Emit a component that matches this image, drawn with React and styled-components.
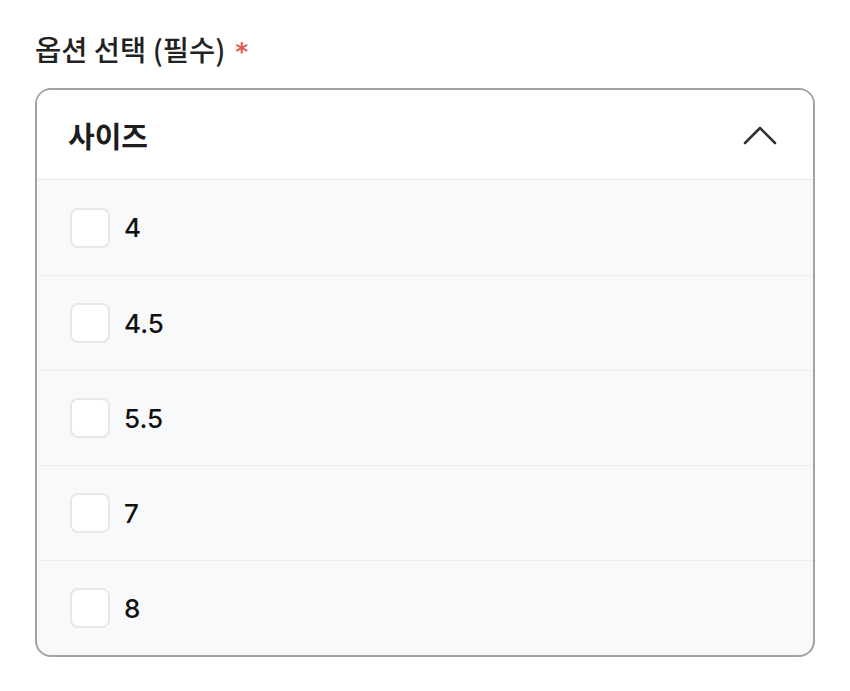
import React from "react";
import styled, { createGlobalStyle } from "styled-components";

const GlobalStyle = createGlobalStyle`
	body {
		margin: 0;
		background: #ffffff;
		font-family: "Inter", "Noto Sans CJK KR", sans-serif;
		color: #1d1d1f;
	}
`;

const Page = styled.div`
	padding: 29px 35px 0 35px;
	width: 780px;
`;

const Label = styled.div`
	font-family: "Noto Sans CJK KR", sans-serif;
	font-size: 28.5px;
	font-weight: 500;
	height: 40px;
	line-height: 40px;
	color: #222;
	display: flex;
	align-items: center;
	gap: 10px;

	.required {
		color: #e25a4f;
		font-family: "DejaVu Sans", sans-serif;
		font-size: 24px;
		font-weight: 700;
		line-height: 24px;
		transform: translateY(3px);
	}
`;

const Box = styled.div`
	margin-top: 19px;
	border: 2px solid #a3a3a5;
	border-radius: 16px;
	overflow: hidden;
	background: #f8f9fb;
`;

const Header = styled.div`
	height: 89px;
	display: flex;
	align-items: center;
	justify-content: space-between;
	padding: 0 36px 0 31px;
	background: #ffffff;
	border-bottom: 1px solid #e6e7ea;

	h3 {
		margin: 0;
		font-family: "Noto Sans CJK KR", sans-serif;
		font-size: 29px;
		font-weight: 700;
		color: #1d1d1f;
	}
`;

const Row = styled.label`
	height: 95px;
	display: flex;
	align-items: center;
	gap: 14px;
	padding-left: 33px;
	box-sizing: border-box;
	border-top: ${(props) => (props.first ? "none" : "1px solid #eceef1")};
	font-size: 26px;
	font-weight: 500;
	color: #111;
`;

const Check = styled.span`
	width: 40px;
	height: 40px;
	box-sizing: border-box;
	border: 2px solid #e6e7e9;
	border-radius: 8px;
	background: #ffffff;
`;

const sizes = ["4", "4.5", "5.5", "7", "8"];

const App = () => {
	return (
		<Page>
			<GlobalStyle />
			<Label>
				옵션 선택 (필수) <span className="required">*</span>
			</Label>
			<Box>
				<Header>
					<h3>사이즈</h3>
					<svg width="34" height="20" viewBox="0 0 34 20" fill="none">
						<path d="M2 18 L17 3 L32 18" stroke="#333" strokeWidth="2.6" strokeLinecap="round" strokeLinejoin="round" />
					</svg>
				</Header>
				{sizes.map((s, i) => (
					<Row key={s} first={i === 0}>
						<Check />
						{s}
					</Row>
				))}
			</Box>
		</Page>
	);
};

export default App;
